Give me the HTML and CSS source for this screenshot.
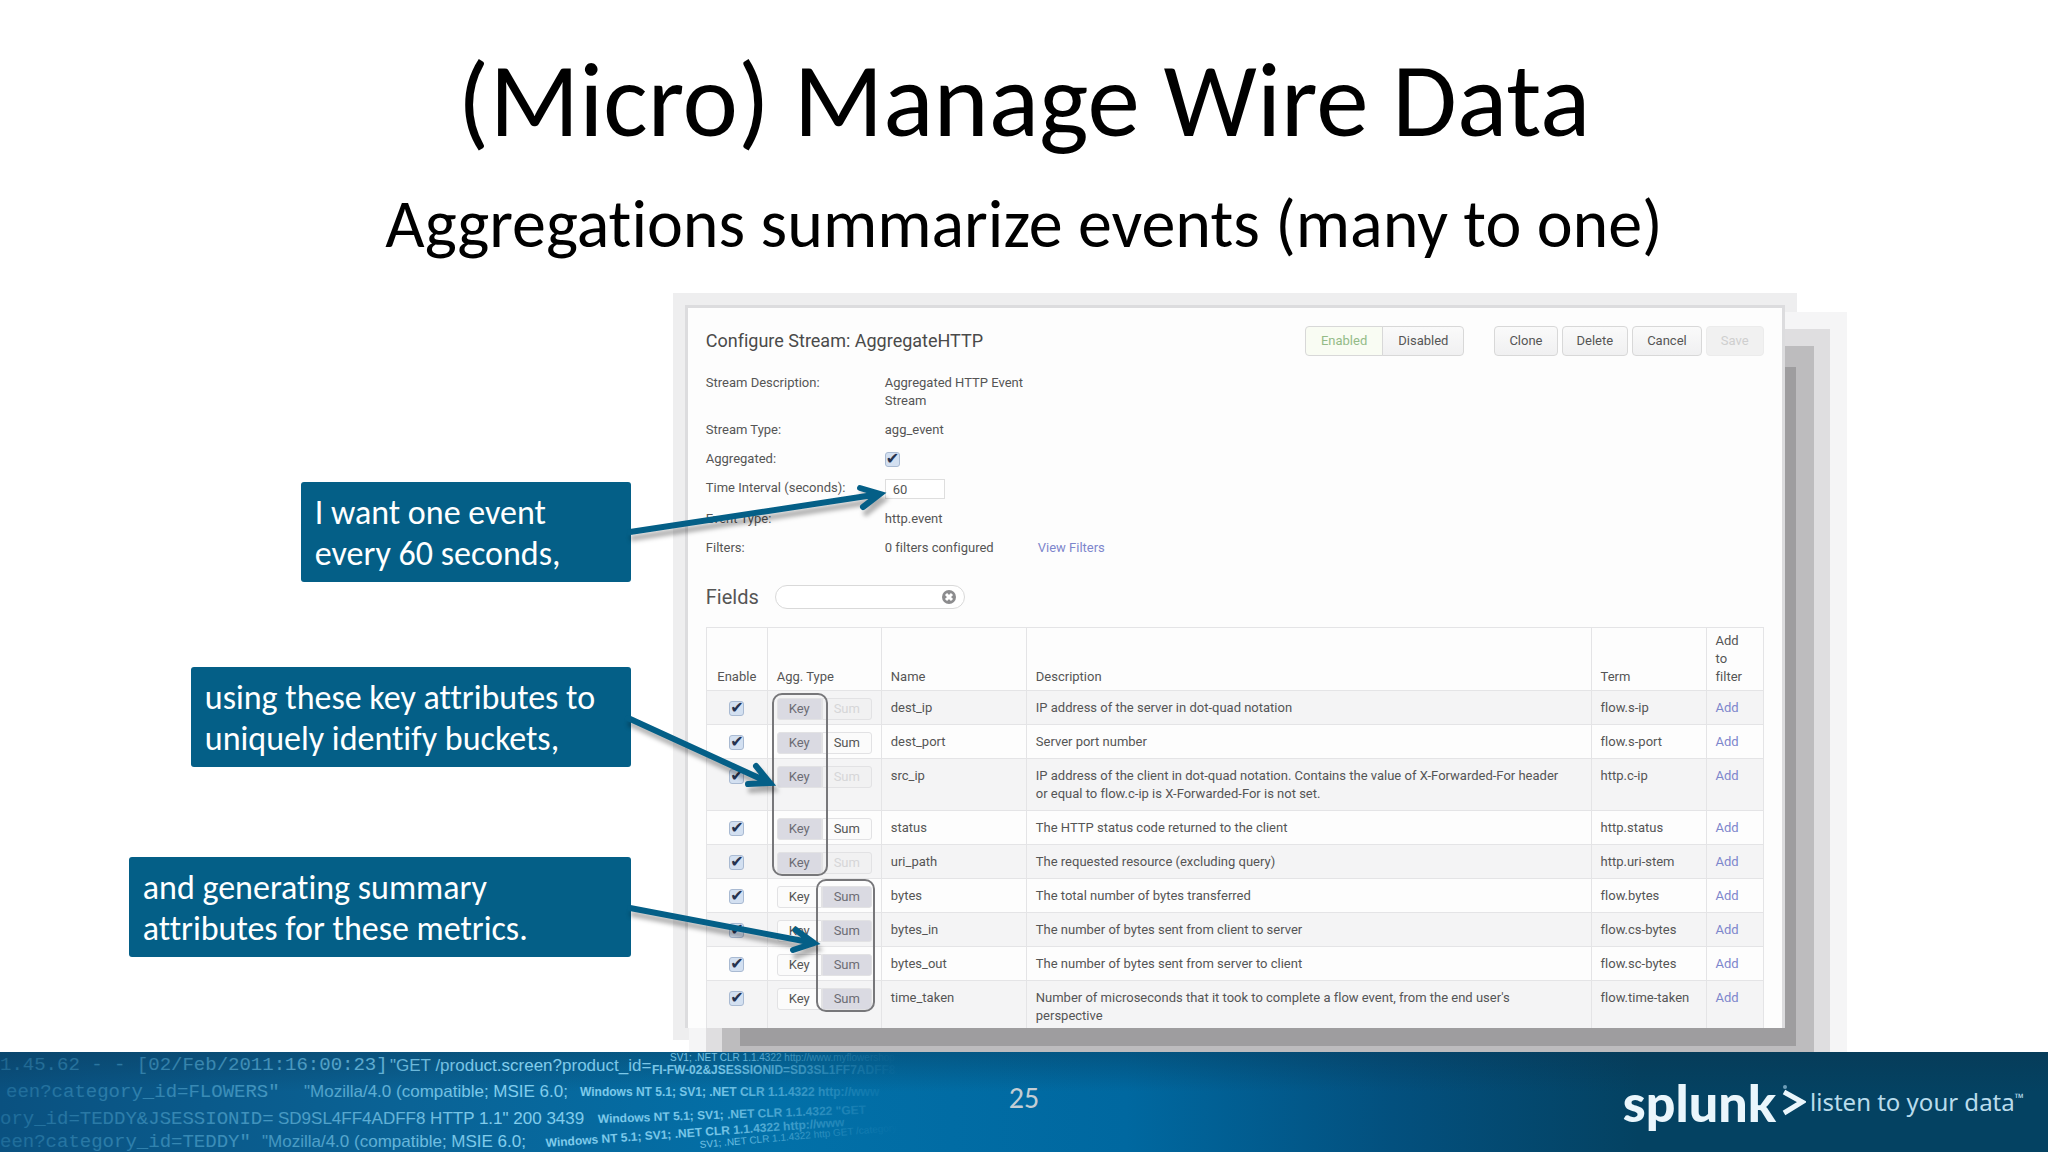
FILE: index.html
```html
<!DOCTYPE html>
<html lang="en">
<head>
    <meta charset="UTF-8">
    <meta name="viewport" content="width=device-width, initial-scale=1.0">
    <title>(Micro) Manage Wire Data</title>
    <link rel="stylesheet" href="styles.css">
</head>
<body>
    <header class="heading">
        <h1>(Micro) Manage Wire Data</h1>
        <h2>Aggregations summarize events (many to one)</h2>
    </header>

    <main class="content">
        <div class="callouts">
            <p class="callout interval">I want one event<br>every 60 seconds,</p>
            <p class="callout keys">using these key attributes to<br>uniquely identify buckets,</p>
            <p class="callout metrics">and generating summary<br>attributes for these metrics.</p>
        </div>

        <section class="panel">
            <div class="panel-header">
                <h3>Configure Stream: AggregateHTTP</h3>
                <div class="toggle">
                    <button class="btn on">Enabled</button><button class="btn">Disabled</button>
                </div>
                <div class="actions">
                    <button class="btn">Clone</button>
                    <button class="btn">Delete</button>
                    <button class="btn">Cancel</button>
                    <button class="btn" disabled>Save</button>
                </div>
            </div>

            <div class="settings">
                <span>Stream Description:</span>
                <span class="value">Aggregated HTTP Event Stream</span>
                <span>Stream Type:</span>
                <span>agg_event</span>
                <label for="aggregated">Aggregated:</label>
                <span><input type="checkbox" id="aggregated" checked></span>
                <label for="interval">Time Interval (seconds):</label>
                <span><input type="text" id="interval" class="interval-input" value="60"></span>
                <span>Event Type:</span>
                <span>http.event</span>
                <span>Filters:</span>
                <span class="filters">0 filters configured <a href="#">View Filters</a></span>
            </div>

            <div class="fields-bar">
                <label for="search">Fields</label>
                <div class="search">
                    <input type="text" id="search">
                    <button class="clear" aria-label="Clear">
                        <svg viewBox="0 0 16 16" width="16" height="16">
                            <circle cx="8" cy="8" r="7" fill="#8c8c8e"/>
                            <path d="M5 5l6 6M11 5l-6 6" stroke="#fff" stroke-width="3"/>
                        </svg>
                    </button>
                </div>
            </div>

            <table>
                <colgroup>
                    <col class="col-enable">
                    <col class="col-type">
                    <col class="col-name">
                    <col>
                    <col class="col-term">
                    <col class="col-add">
                </colgroup>
                <thead>
                    <tr>
                        <th class="center">Enable</th>
                        <th>Agg. Type</th>
                        <th>Name</th>
                        <th>Description</th>
                        <th>Term</th>
                        <th>Add<br>to<br>filter</th>
                    </tr>
                </thead>
                <tbody id="fields-list"></tbody>
            </table>
        </section>

        <!-- Arrows and outlines over the panel -->
        <svg class="overlay" viewBox="0 0 2048 747">
            <g class="outline">
                <rect x="773" y="389" width="54" height="181" rx="9"/>
                <rect x="817" y="575" width="57" height="131" rx="9"/>
            </g>
            <g class="arrow">
                <path d="M630 227L880 189M860 183L880 189L863 202"/>
                <path d="M628 413L770 478M756 461L770 478L748 479"/>
                <path d="M630 603L814 638M796 625L814 638L793 645"/>
            </g>
        </svg>
    </main>

    <footer class="footer">
        <svg class="log" viewBox="0 0 1000 100" width="1000" height="100">
            <defs>
                <linearGradient id="fade" gradientUnits="userSpaceOnUse" x1="0" y1="0" x2="900" y2="0">
                    <stop offset="0" stop-color="#4fa9d2" stop-opacity=".3"/>
                    <stop offset=".3" stop-color="#6bbce0" stop-opacity=".6"/>
                    <stop offset=".55" stop-color="#8ad4f2" stop-opacity=".95"/>
                    <stop offset=".8" stop-color="#8ad4f2" stop-opacity=".85"/>
                    <stop offset="1" stop-color="#5fb4da" stop-opacity="0"/>
                </linearGradient>
            </defs>
            <g fill="url(#fade)">
                <text class="mono" x="0" y="18">1.45.62 - - [02/Feb/2011:16:00:23]</text>
                <text class="near" x="390" y="19">"GET /product.screen?product_id=</text>
                <text class="mid" x="652" y="22">FI-FW-02&amp;JSESSIONID=SD3SL1FF7ADFF8</text>
                <text class="far" x="670" y="9">SV1; .NET CLR 1.1.4322 http://www.myflowershop</text>
                <text class="mono" x="6" y="45">een?category_id=FLOWERS"</text>
                <text class="near" x="304" y="45">"Mozilla/4.0 (compatible; MSIE 6.0;</text>
                <text class="mid" x="580" y="44">Windows NT 5.1; SV1; .NET CLR 1.1.4322 http://www</text>
                <text class="mono" x="0" y="72">ory_id=TEDDY&amp;JSESSIONID=</text>
                <text class="near" x="278" y="72">SD9SL4FF4ADFF8 HTTP 1.1" 200 3439</text>
                <text class="mid" x="598" y="71" transform="rotate(-2 598 71)">Windows NT 5.1; SV1; .NET CLR 1.1.4322 "GET</text>
                <text class="mono" x="0" y="95">een?category_id=TEDDY"</text>
                <text class="near" x="262" y="95">"Mozilla/4.0 (compatible; MSIE 6.0;</text>
                <text class="mid" x="546" y="95" transform="rotate(-4 546 95)">Windows NT 5.1; SV1; .NET CLR 1.1.4322 http://www</text>
                <text class="far" x="700" y="96" transform="rotate(-5 700 96)">SV1; .NET CLR 1.1.4322 http GET /category</text>
            </g>
        </svg>
        <span class="page-number">25</span>
        <div class="brand">
            <span class="logo">splunk</span>
            <svg viewBox="0 0 24 34" width="24" height="34">
                <path d="M2 7L20 17L2 28" fill="none" stroke="#eaf6fc" stroke-width="5"/>
                <circle cx="3" cy="2" r="2" fill="#6f9db8"/>
            </svg>
            <span class="tagline">listen to your data<sup>™</sup></span>
        </div>
    </footer>

    <script>
        const fields = [
            { name: 'dest_ip', type: 'Key', locked: true, term: 'flow.s-ip', description: 'IP address of the server in dot-quad notation' },
            { name: 'dest_port', type: 'Key', term: 'flow.s-port', description: 'Server port number' },
            { name: 'src_ip', type: 'Key', locked: true, term: 'http.c-ip', description: 'IP address of the client in dot-quad notation. Contains the value of X-Forwarded-For header or equal to flow.c-ip is X-Forwarded-For is not set.' },
            { name: 'status', type: 'Key', term: 'http.status', description: 'The HTTP status code returned to the client' },
            { name: 'uri_path', type: 'Key', locked: true, term: 'http.uri-stem', description: 'The requested resource (excluding query)' },
            { name: 'bytes', type: 'Sum', term: 'flow.bytes', description: 'The total number of bytes transferred' },
            { name: 'bytes_in', type: 'Sum', term: 'flow.cs-bytes', description: 'The number of bytes sent from client to server' },
            { name: 'bytes_out', type: 'Sum', term: 'flow.sc-bytes', description: 'The number of bytes sent from server to client' },
            { name: 'time_taken', type: 'Sum', term: 'flow.time-taken', description: 'Number of microseconds that it took to complete a flow event, from the end user\'s perspective' }
        ];

        document.getElementById('fields-list').innerHTML = fields.map(field => `
            <tr>
                <td class="center"><input type="checkbox" aria-label="Enable ${field.name}" checked></td>
                <td><div class="agg-type">
                    <button class="${field.type === 'Key' ? 'selected' : ''}">Key</button>
                    <button class="${field.type === 'Sum' ? 'selected' : ''}" ${field.locked ? 'disabled' : ''}>Sum</button>
                </div></td>
                <td>${field.name}</td>
                <td class="description">${field.description}</td>
                <td>${field.term}</td>
                <td><a href="#">Add</a></td>
            </tr>`).join('');
    </script>
</body>
</html>
```

FILE: styles.css
```css
* {
    box-sizing: border-box;
}

body {
    display: flex;
    flex-direction: column;
    min-height: 100vh;
    margin: 0;
    background-color: #fff;
    font-family: Carlito, Lato, sans-serif;
    font-variant-ligatures: none;
    overflow-x: hidden;
}

h1, h2, h3, p {
    margin: 0;
    font-weight: normal;
}

.heading {
    padding: 40px 0 41px;
    text-align: center;
    color: #000;
}

h1 {
    font-size: 105px;
    line-height: 120px;
}

h2 {
    margin-top: 24px;
    font-size: 68px;
    line-height: 80px;
}

.content {
    position: relative;
    display: grid;
    grid-template-columns: 30.8% 53.7%;
    column-gap: 54px;
    flex: 1;
}

.callouts {
    display: flex;
    flex-direction: column;
    align-items: flex-end;
    padding-top: 177px;
}

.callout {
    height: 100px;
    padding: 10px 14px;
    border-radius: 3px;
    background-color: #045f87;
    color: #fff;
    font-size: 34px;
    line-height: 41px;
}

.interval {
    width: 330px;
    margin-bottom: 85px;
}

.keys {
    width: 440px;
    margin-bottom: 90px;
}

.metrics {
    width: 502px;
}

.panel {
    height: 723px;
    padding: 17px 18px 0;
    overflow: hidden;
    border: 3px solid #dcdcde;
    border-bottom: 0;
    background-color: #fdfdfd;
    box-shadow:
        33px 40px 0 -22px #9e9d9f,
        33px 37px 0 -4px #bdbcbe,
        33px 36px 0 12px #dfdee0,
        33px 36px 0 29px #f5f5f6,
        0 0 0 12px #eeeeef;
    font-family: Roboto, sans-serif;
    font-size: 13px;
    line-height: 18px;
    color: #555;
}

.panel a {
    color: #7d86cc;
    text-decoration: none;
}

.panel button, .panel input {
    font: inherit;
    color: inherit;
}

.panel-header {
    display: flex;
    align-items: center;
    height: 32px;
}

.panel-header h3 {
    flex: 1;
    font-size: 18px;
    line-height: 24px;
    color: #4a4a4a;
}

.panel .btn {
    height: 30px;
    padding: 0 14px;
    border: 1px solid #d8d8d8;
    border-radius: 4px;
    background: linear-gradient(#fafafa, #f0f0f1);
}

.panel .btn:disabled {
    color: #cfcfcf;
    border-color: #ececec;
    background: #f1f1f1;
}

.toggle {
    display: flex;
    margin-right: 30px;
}

.toggle .btn {
    padding: 0 15px;
}

.panel .toggle .btn {
    padding: 0 15px;
}

.panel .toggle .btn:first-child {
    border-radius: 4px 0 0 4px;
}

.panel .toggle .btn:last-child {
    margin-left: -1px;
    border-radius: 0 4px 4px 0;
}

.panel .toggle .on {
    background: #f9fcf3;
    color: #94bb88;
}

.actions {
    display: flex;
    gap: 4px;
}

.settings {
    display: grid;
    grid-template-columns: 179px 1fr;
    row-gap: 11px;
    padding-top: 17px;
}

.settings > * {
    min-height: 18px;
}

.value {
    width: 150px;
}

.filters {
    display: flex;
    gap: 44px;
}

input[type="checkbox"] {
    display: block;
    appearance: none;
    width: 15px;
    height: 15px;
    margin: 2px 0 0;
    border: 1px solid #a9bad2;
    border-radius: 3px;
    background-color: #d3e0f1;
}

input[type="checkbox"]:checked::before {
    content: "✔";
    display: block;
    font: 16px/12px "DejaVu Sans", sans-serif;
    color: #26334f;
}

.interval-input {
    display: block;
    width: 60px;
    height: 20px;
    padding: 0 7px;
    border: 1px solid #dedede;
    background-color: #fff;
}

.fields-bar {
    display: flex;
    align-items: center;
    gap: 16px;
    padding: 28px 0 18px;
}

.fields-bar label {
    font-size: 20px;
    line-height: 24px;
}

.search {
    display: flex;
    align-items: center;
    width: 190px;
    height: 24px;
    padding: 0 7px 0 12px;
    border: 1px solid #d9d9d9;
    border-radius: 12px;
    background-color: #fff;
}

.search input {
    flex: 1;
    min-width: 0;
    border: 0;
    background: none;
}

.clear {
    display: flex;
    padding: 0;
    border: 0;
    background: none;
}

table {
    width: 100%;
    border-collapse: collapse;
    table-layout: fixed;
}

.col-enable {
    width: 61px;
}

.col-type {
    width: 114px;
}

.col-name {
    width: 145px;
}

.col-term {
    width: 115px;
}

.col-add {
    width: 57px;
}

th, td {
    padding: 8px 9px 7px;
    border: 1px solid #e4e4e6;
    text-align: left;
    vertical-align: top;
}

th {
    padding: 4px 9px;
    font-weight: normal;
    vertical-align: bottom;
}

td:nth-child(5) {
    white-space: nowrap;
}

td.description {
    padding-right: 22px;
}

tbody tr:nth-child(odd) {
    background-color: #f4f4f5;
}

.center {
    text-align: center;
}

td.center input {
    margin: 2px auto 0;
}

.agg-type {
    display: flex;
    height: 18px;
    margin-top: -1px;
}

.agg-type button {
    width: 45px;
    height: 22px;
    padding: 0;
    border: 1px solid #e2e2e4;
    border-radius: 3px 0 0 3px;
    background-color: #fbfbfb;
}

.agg-type button:last-child {
    width: 50px;
    border-radius: 0 3px 3px 0;
}

.panel .agg-type .selected {
    background-color: #dadae2;
    color: #6c6c74;
}

.panel .agg-type button:disabled {
    background-color: #f1f1f2;
    color: #d6d6d8;
}

.overlay {
    position: absolute;
    top: 0;
    left: 0;
    width: 100%;
    pointer-events: none;
}

.outline {
    fill: none;
    stroke: #77777a;
    stroke-width: 2;
}

.arrow {
    fill: none;
    stroke: #045f87;
    stroke-width: 6;
    stroke-linecap: round;
    filter: drop-shadow(3px 6px 2px rgba(0, 0, 0, 0.3));
}

.footer {
    position: relative;
    display: grid;
    grid-template-columns: 1fr auto 1fr;
    align-items: center;
    height: 100px;
    overflow: hidden;
    background:
        linear-gradient(rgba(10, 50, 75, 0.35), rgba(10, 50, 75, 0) 40%),
        linear-gradient(90deg, #0a5180 0%, #0a6396 20%, #0270a8 38%, #0068a0 55%, #03507e 68%, #044262 80%);
}

.log {
    display: block;
}

.mono {
    font: 19px "Liberation Mono", monospace;
}

.near {
    font: 17px "Liberation Sans", sans-serif;
}

.mid {
    font: bold 12px "Liberation Sans", sans-serif;
}

.far {
    font: 10px "Liberation Sans", sans-serif;
}

.page-number {
    padding-bottom: 8px;
    color: #c3cdd4;
    font-size: 30px;
    line-height: 36px;
}

.brand {
    display: flex;
    align-items: center;
    justify-content: flex-end;
    padding-right: 24px;
    color: #eaf6fc;
}

.brand svg {
    margin: 0 4px 0 6px;
}

.logo {
    font-family: Lato, sans-serif;
    font-weight: 900;
    font-size: 52px;
    line-height: 60px;
}

.tagline {
    font-family: "Noto Sans", sans-serif;
    font-size: 24px;
    line-height: 28px;
    color: #b9dcec;
}

.tagline sup {
    font-size: 12px;
    line-height: 0;
}
```
